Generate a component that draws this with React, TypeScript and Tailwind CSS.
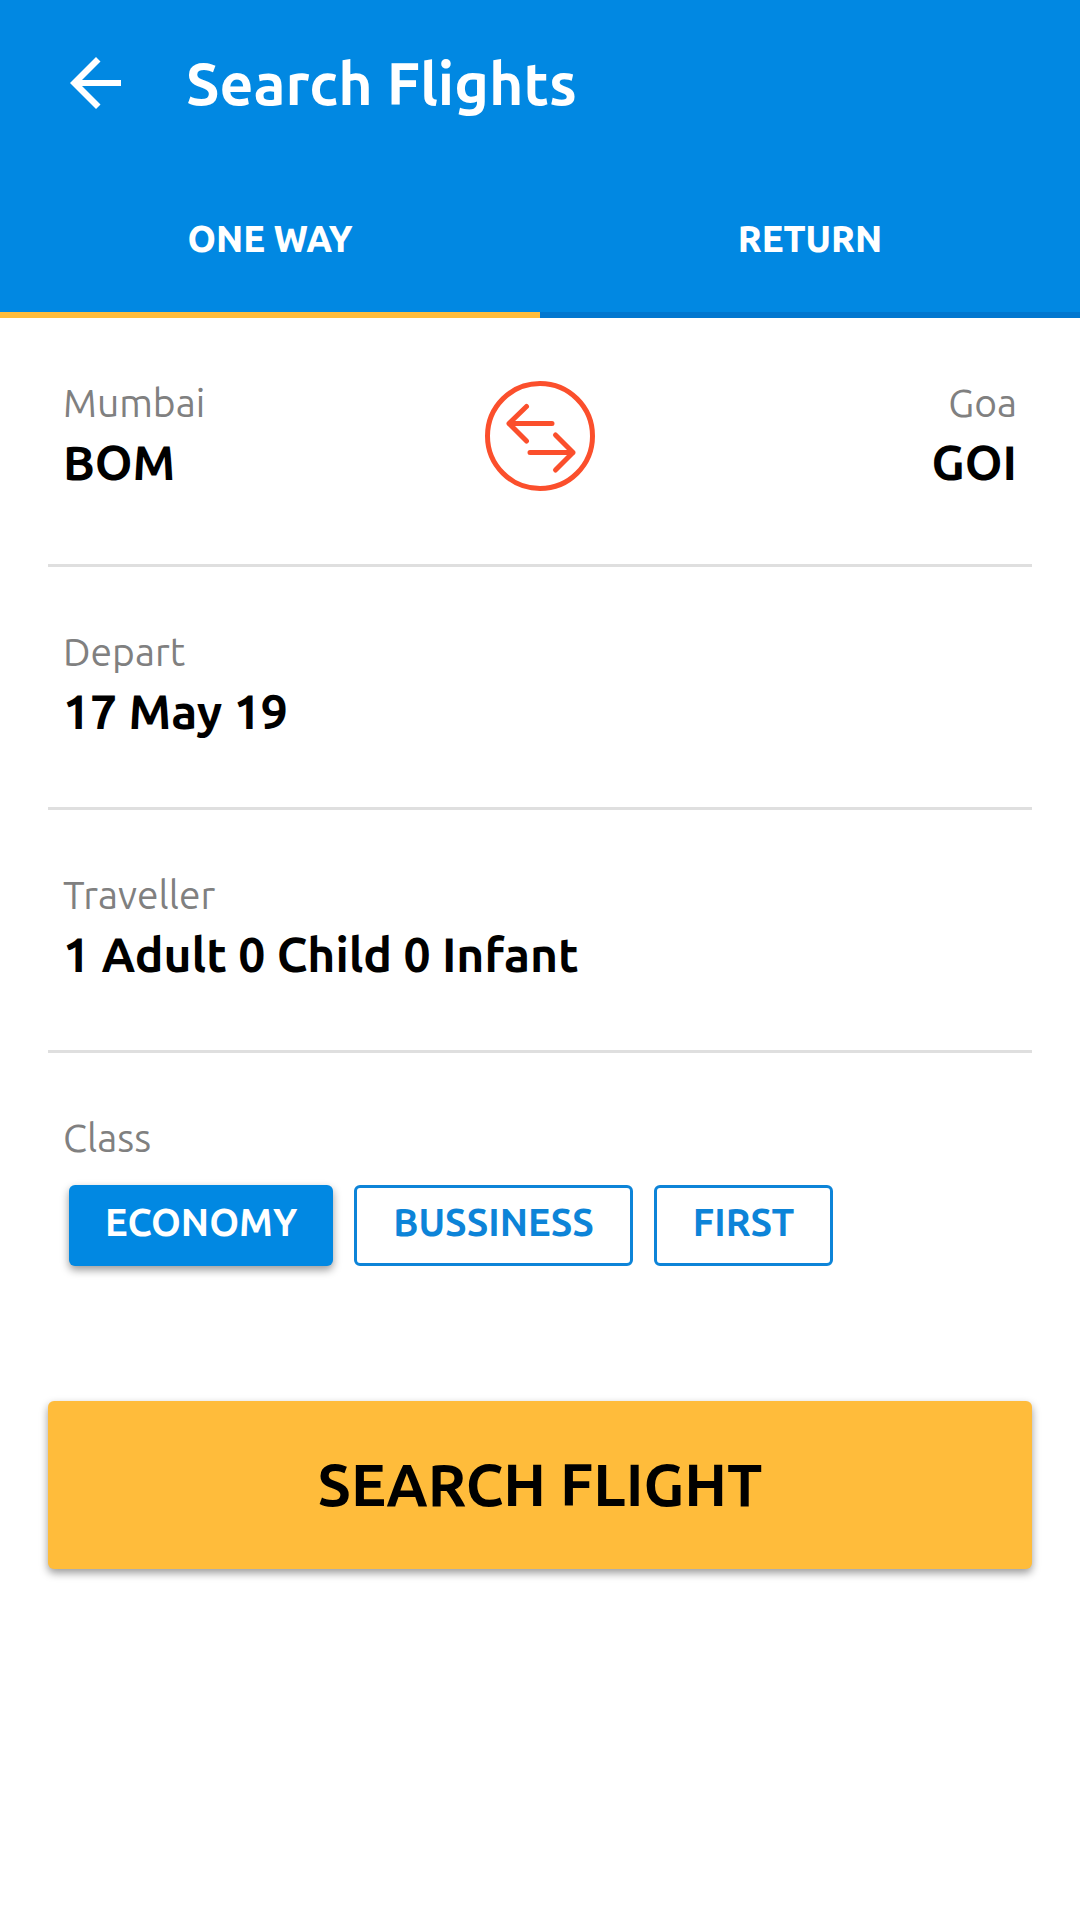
import { useState } from "react";

const TABS = ["ONE WAY", "RETURN"];
const CLASSES = ["ECONOMY", "BUSSINESS", "FIRST"];

function BackArrow() {
  return (
    <svg viewBox="0 0 52 52" className="size-[52px]" fill="currentColor" aria-hidden="true">
      <path d="M51 23v6H12l18.5 18.5L26 52 0 26 26 0l4.500 4.500L12 23z" />
    </svg>
  );
}

function SwapIcon() {
  return (
    <svg
      viewBox="0 0 110 110"
      className="size-[110px]"
      fill="none"
      stroke="#fb4f2c"
      strokeWidth="5"
      strokeLinecap="round"
      strokeLinejoin="round"
      aria-hidden="true"
    >
      <circle cx="55" cy="55" r="52.500" />
      <path d="M67 42.500H24M41.500 25.500L24 42.500L41.500 60" />
      <path d="M45 71.500H88M70.500 54L88 71.500L70.500 89" />
    </svg>
  );
}

function Field({ label, value, end = false }: { label: string; value: string; end?: boolean }) {
  return (
    <button type="button" className={end ? "block text-right" : "block text-left"}>
      <span className="block text-[39px] leading-[52px] text-[#808080]">{label}</span>
      <span className="block text-[48px] leading-[66px] font-bold text-black">{value}</span>
    </button>
  );
}

export default function App() {
  const [tab, setTab] = useState("ONE WAY");
  const [cabin, setCabin] = useState("ECONOMY");

  return (
    <div className="min-h-screen bg-white font-['Ubuntu','Noto_Sans',sans-serif]">
      <header className="bg-[#0188e2] text-white">
        <div className="flex h-[166px] items-center gap-16 px-[70px]">
          <button type="button" aria-label="Back">
            <BackArrow />
          </button>
          <h1 className="text-[59px] leading-[72px] font-bold">Search Flights</h1>
        </div>
        <div role="tablist" className="grid grid-cols-2">
          {TABS.map((name) => (
            <button
              key={name}
              type="button"
              role="tab"
              aria-selected={tab === name}
              onClick={() => setTab(name)}
              className={
                "h-[152px] border-b-6 text-[36px] leading-[48px] font-extrabold " +
                (tab === name ? "border-[#ffbc3b]" : "border-[#0277cf]")
              }
            >
              {name}
            </button>
          ))}
        </div>
      </header>

      <main className="px-12">
        <section className="grid grid-cols-3 border-b-3 border-[#dfdfdf] px-[15px] pt-[59px] pb-[69px]">
          <div className="justify-self-start">
            <Field label="Mumbai" value="BOM" />
          </div>
          <button type="button" aria-label="Swap cities" className="self-center justify-self-center">
            <SwapIcon />
          </button>
          <div className="justify-self-end">
            <Field label="Goa" value="GOI" end />
          </div>
        </section>

        <section className="border-b-3 border-[#dfdfdf] px-[15px] pt-[59px] pb-[63px]">
          <Field label="Depart" value="17 May 19" />
        </section>

        <section className="border-b-3 border-[#dfdfdf] px-[15px] pt-[59px] pb-[63px]">
          <Field label="Traveller" value="1 Adult 0 Child 0 Infant" />
        </section>

        <section className="px-[15px] pt-[59px]">
          <h2 id="cabin" className="text-[39px] leading-[52px] text-[#808080]">
            Class
          </h2>
          <div role="group" aria-labelledby="cabin" className="mt-[21px] flex flex-wrap gap-[21px] px-[6px]">
            {CLASSES.map((name) => (
              <button
                key={name}
                type="button"
                aria-pressed={cabin === name}
                onClick={() => setCabin(name)}
                className={
                  "h-[81px] rounded-md px-9 pb-[7px] text-[38px] leading-[50px] font-bold " +
                  (cabin === name
                    ? "bg-[#0188e2] text-white shadow-[0_4px_8px_rgba(0,0,0,0.4)]"
                    : "border-3 border-[#0d84d8] bg-white text-[#0d84d8]")
                }
              >
                {name}
              </button>
            ))}
          </div>
        </section>

        <button
          type="submit"
          className="mt-[135px] h-[168px] w-full rounded-md bg-[#ffbc3b] pb-0.5 text-[59px] leading-[72px] font-bold text-black shadow-[0_4px_8px_rgba(0,0,0,0.4)]"
        >
          SEARCH FLIGHT
        </button>
      </main>
    </div>
  );
}
